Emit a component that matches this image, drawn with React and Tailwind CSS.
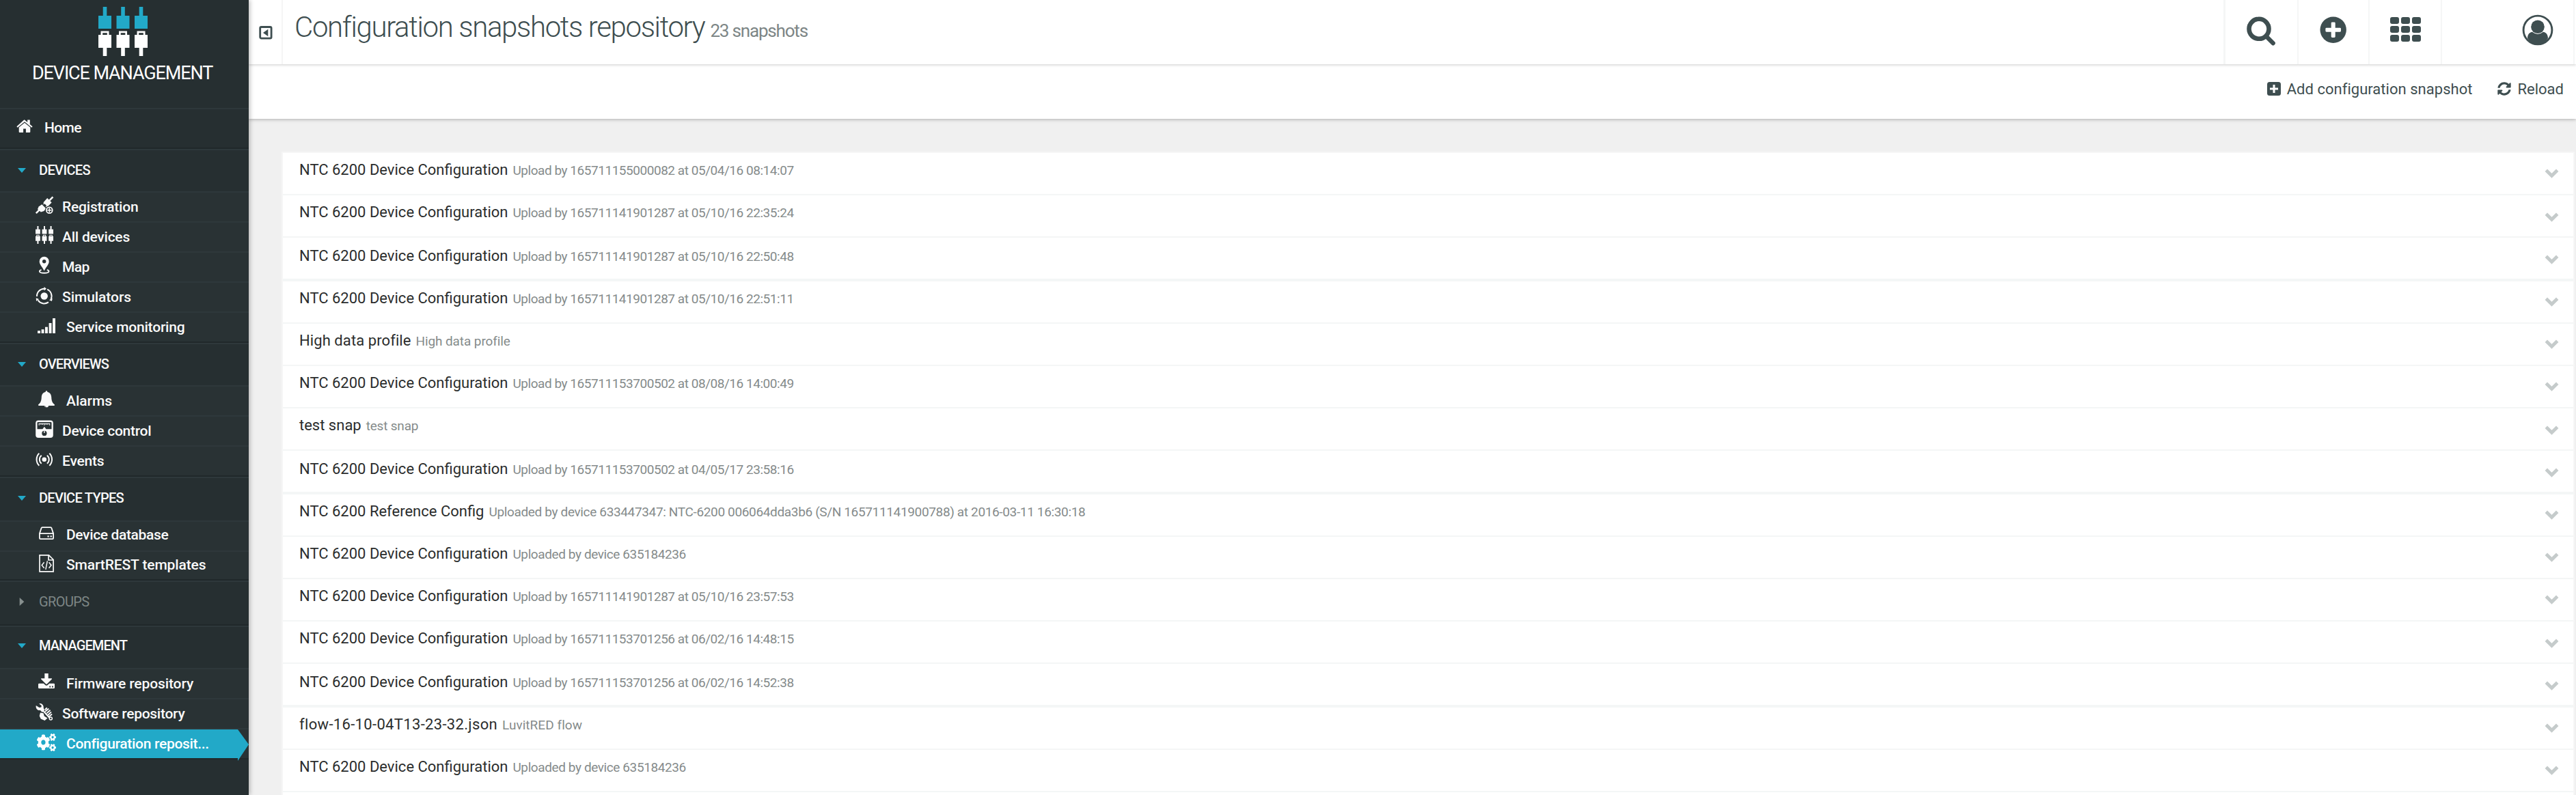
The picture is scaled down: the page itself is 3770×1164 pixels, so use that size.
import React from 'react';
import { FaCogs, FaSyncAlt } from 'react-icons/fa';

/* ---------- icons ---------- */

function Connectors({ className, top = 'currentColor' }) {
  return (
    <svg className={className} viewBox="0 0 72 72">
      {[0, 26.5, 53].map((x) => (
        <g key={x} transform={`translate(${x} 0)`}>
          <path d="M6.7 0h5.6v13H19v19H0V13h6.7z" fill={top} />
          <path
            d="M3.5 35.5h12V41H19v19h-6.7v12H6.7V60H0V41h3.5zM6.2 38.2V41h6.6v-2.8z"
            fill="currentColor"
            fillRule="evenodd"
          />
        </g>
      ))}
    </svg>
  );
}

const icon = 'block h-8 w-8 shrink-0';

function RegistrationIcon() {
  return (
    <svg className={icon} viewBox="0 0 32 32" fill="currentColor">
      <path d="M25.4 2.4 20 7.8M.8 26.2l5-5" stroke="currentColor" strokeWidth="2.6" />
      <path d="m17.2 4 6.4 6.4-5.8 6.4L11.400 10.400z" />
      <path d="m9.300 13.300 6 6-2.900 3.700-4.600 1.600L3 20.300l1.700-3.800z" />
      <path d="m11.500 13 2.300-2 3.600 3.600-2.200 2.400" fill="none" stroke="currentColor" strokeWidth="1.300" />
      <circle cx="20.300" cy="21.700" r="6.400" fill="#293234" />
      <circle cx="20.300" cy="21.700" r="4.400" fill="none" stroke="currentColor" strokeWidth="1.800" />
      <path d="M20.300 18.600v6.200M17.200 21.700h6.200" stroke="currentColor" strokeWidth="1.600" />
    </svg>
  );
}
function AllDevicesIcon() {
  return (
    <span className={icon}>
      <Connectors className="mt-[1px] block h-[26px] w-[26px]" />
    </span>
  );
}
function MapIcon() {
  return (
    <svg className={icon} viewBox="0 0 32 32" fill="currentColor">
      <path
        d="M12.700 1.700a7 7 0 0 1 7 7c0 4.500-4.200 8-7 13.800C9.900 16.700 5.700 13.200 5.700 8.700a7 7 0 0 1 7-7zm0 4.300a2.700 2.700 0 1 0 0 5.400 2.700 2.700 0 0 0 0-5.400z"
        fillRule="evenodd"
      />
      <path d="M8.600 21.200c-1.800.500-2.700 1.200-2.700 2 0 1.500 3 2.500 6.800 2.500s6.800-1 6.800-2.500c0-.800-.9-1.500-2.700-2" fill="none" stroke="currentColor" strokeWidth="1.900" />
    </svg>
  );
}
function SimulatorsIcon() {
  return (
    <svg className={icon} viewBox="0 0 32 32" fill="currentColor">
      <circle cx="12.700" cy="15.500" r="5.200" />
      <g fill="none" stroke="currentColor" strokeWidth="2">
        <path d="M2 16A10.800 10.800 0 0 1 13 4.700" />
        <path d="M17.200 5.700A10.800 10.800 0 0 1 22.600 20" />
        <path d="M18.900 24.400A10.800 10.800 0 0 1 3.600 21.500" />
      </g>
      <path d="M12.500 1.900 16 4.700l-3.500 2.900zM24.800 18.700l-.9 4.400-4-1.900zM1 23l-.2-4.700 4.200 1.700z" />
    </svg>
  );
}
function SignalIcon() {
  return (
    <svg className={icon} viewBox="0 0 32 32" fill="currentColor">
      <path d="M3 22.300h4V26H3zM8.600 20.300h3.900V26H8.600zM14 16.700h3.900V26H14zM19.600 11h3.900v15h-3.900zM25 4h4v22h-4z" />
    </svg>
  );
}
function BellIcon() {
  return (
    <svg className={icon} viewBox="0 0 32 32" fill="currentColor">
      <path d="M16 2.200c.9 0 1.500.7 1.400 1.700 3.700.7 5.600 3.500 5.800 7.300.2 6 1.600 8.800 4.800 11.200.2.800-.3 1.500-1.300 1.500H19.300a3.400 3.400 0 0 1-6.600 0H5.300c-1 0-1.500-.7-1.300-1.500 3.200-2.400 4.600-5.200 4.800-11.200.2-3.800 2.100-6.600 5.800-7.300-.1-1 .5-1.700 1.400-1.700z" />
      <path d="M13.800 24.300c.2 1.300 1 2 2.200 2.200" fill="none" stroke="#293234" strokeWidth=".7" />
    </svg>
  );
}
function ControlIcon() {
  return (
    <svg className={icon} viewBox="0 0 32 32" fill="currentColor">
      <rect x=".2" y="1.600" width="25.600" height="25.400" rx="4" />
      <path d="M3.800 4h18.400q1.300 0 1.300 1.300v9H15.500l-2.600-3.600-2.600 3.600H2.500v-9Q2.500 4 3.800 4z" fill="#293234" />
      <path d="M5.200 5.700v3M8 5.700v2.300M10.400 5.700v2.300M12.900 5.700v3M15.400 5.700v2.300M17.900 5.700v2.300M20.700 5.700v3M5.200 6.200h15.500" stroke="currentColor" strokeWidth="1.100" />
      <circle cx="12.900" cy="20.400" r="3.600" fill="#293234" />
      <path d="M12.900 16.500v3.500" stroke="currentColor" strokeWidth="1.400" />
    </svg>
  );
}
function EventsIcon() {
  return (
    <svg className={icon} viewBox="0 0 32 32" fill="currentColor">
      <circle cx="12.800" cy="14.700" r="3.300" />
      <g fill="none" stroke="currentColor" strokeWidth="2">
        <path d="M8.700 8.700a7.800 7.800 0 0 0 0 12M5.300 5.700a12.700 12.700 0 0 0 0 18M16.900 8.700a7.800 7.800 0 0 1 0 12M20.300 5.700a12.700 12.700 0 0 1 0 18" />
      </g>
    </svg>
  );
}
function DatabaseIcon() {
  return (
    <svg className={icon} viewBox="0 0 32 32" fill="none" stroke="currentColor" strokeWidth="1.800">
      <path d="M9.900 4.200h12.200q1 0 1.300.9l2.700 8v6.600q0 1.400-1.400 1.400H7.300q-1.400 0-1.400-1.400v-6.600l2.700-8q.300-.900 1.300-.900zM6 13.200h20" />
      <path d="M17.500 17.400h2.200M21.600 17.400h2.200" strokeWidth="2.200" />
    </svg>
  );
}
function TemplateIcon() {
  return (
    <svg className={icon} viewBox="0 0 32 32" fill="none" stroke="currentColor" strokeWidth="1.700">
      <path d="M6 .9h13.500l6.600 6.600v17.300H6zM19 1v7h7" />
      <path d="m12.600 11.300-3.400 4.200 3.400 4.200M19.600 11.300l3.400 4.200-3.400 4.200M17.300 9.300l-2.400 12.500" strokeWidth="1.500" />
    </svg>
  );
}
function DownloadIcon() {
  return (
    <svg className={icon} viewBox="0 0 32 32" fill="currentColor">
      <path d="M13.300 2h5.400v7.300h4.600c.7 0 .9.700.5 1.200L16.700 17.400q-.7.700-1.400 0L8.200 10.500c-.4-.5-.2-1.200.5-1.200h4.600z" />
      <path
        d="M5.200 16.800h6.700l2.100 2q2 1.700 4 0l2.100-2h6.700q1.200 0 1.200 1.200v4.800q0 1.200-1.200 1.200H5.200Q4 24 4 22.800V18q0-1.200 1.200-1.200zM20.300 20.600v1.800h1.800v-1.800zM24 20.600v1.800h1.800v-1.800z"
        fillRule="evenodd"
      />
    </svg>
  );
}
function ToolsIcon() {
  return (
    <svg className={icon} viewBox="0 0 32 32" fill="currentColor">
      <path d="M5.200 2.200 8.800 5.300l-.5 2.200-2.800.5L.8 4.900C-.2 9 2.700 12.700 7 12l3 3 3.200-3.600-1.500-2.600C12.300 4.300 9.200 1 5.200 2.200z" />
      <path d="m14.300 10.700 2-1.900M14.500 13.600l4.300-3.500M17 15.800l4-3.600M18.700 18.500l3.800-3.600M20 21l3.500-3" stroke="currentColor" strokeWidth="1.900" strokeLinecap="round" />
      <path d="M11 12.500l10 11" stroke="currentColor" strokeWidth="2" />
      <path d="M7 15.500l4.500.800 1.300 4.300 4.700 3-4 3.300-5.800-2.300-2-4.300z" />
      <circle cx="22.300" cy="24" r="2" fill="none" stroke="currentColor" strokeWidth="1.500" />
    </svg>
  );
}
function CogsIcon() {
  return (
    <span className={icon}>
      <FaCogs className="ml-[2px] mt-[2px] block h-[26px] w-[28px]" preserveAspectRatio="none" />
    </span>
  );
}

/* ---------- sidebar ---------- */

const sections = [
  {
    title: 'DEVICES',
    head: 'h-[60px]',
    line: 'leading-[58px]',
    track: 'tracking-[-0.63px]',
    items: [
      { text: 'Registration', Icon: RegistrationIcon, track: 'tracking-[-0.2px]' },
      { text: 'All devices', Icon: AllDevicesIcon, track: 'tracking-[-0.24px]' },
      { text: 'Map', Icon: MapIcon, track: 'tracking-[-0.6px]' },
      { text: 'Simulators', Icon: SimulatorsIcon, track: 'tracking-[-0.06px]' },
      { text: 'Service monitoring', Icon: SignalIcon, wide: true, track: 'tracking-[-0.2px]' },
    ],
  },
  {
    title: 'OVERVIEWS',
    head: 'h-[60px]',
    line: 'leading-[58px]',
    track: 'tracking-[-0.86px]',
    items: [
      { text: 'Alarms', Icon: BellIcon, wide: true, track: 'tracking-[-0.02px]' },
      { text: 'Device control', Icon: ControlIcon, track: 'tracking-[-0.26px]' },
      { text: 'Events', Icon: EventsIcon, track: 'tracking-[-0.2px]' },
    ],
  },
  {
    title: 'DEVICE TYPES',
    head: 'h-[62px]',
    line: 'leading-[58px]',
    track: 'tracking-[-0.71px]',
    items: [
      { text: 'Device database', Icon: DatabaseIcon, wide: true, track: 'tracking-[-0.36px]', line: 'h-[42px] leading-[38px]' },
      { text: 'SmartREST templates', Icon: TemplateIcon, wide: true, track: 'tracking-[-0.12px]', line: 'h-[40px] leading-[38px]' },
    ],
  },
  { title: 'GROUPS', head: 'h-[62px]', line: 'leading-[58px]', track: 'tracking-[-0.61px]', closed: true, items: [] },
  {
    title: 'MANAGEMENT',
    head: 'h-[60px]',
    line: 'leading-[54px]',
    track: 'tracking-[-0.92px]',
    items: [
      { text: 'Firmware repository', Icon: DownloadIcon, wide: true, track: 'tracking-[-0.11px]' },
      { text: 'Software repository', Icon: ToolsIcon, track: 'tracking-[-0.27px]' },
      { text: 'Configuration reposit...', Icon: CogsIcon, wide: true, track: 'tracking-[-0.3px]', active: true },
    ],
  },
];

function NavItem({ text, Icon, wide, track, line = 'h-[42px] leading-[42px]', active }) {
  return (
    <li className="border-t-2 border-[#2e383b] bg-[#293234]">
      <a className={`relative flex items-start ${line} ${active ? 'w-[348px] bg-[#22a9c8] text-white' : 'w-[364px]'}`}>
        <span className="ml-[52px] mt-1 shrink-0"><Icon /></span>
        <span className={`whitespace-nowrap text-[21px] font-medium ${track} ${wide ? 'ml-[13px]' : 'ml-[7px]'}`}>{text}</span>
        {active && (
          <svg className="absolute left-[348px] top-0 z-10 h-[46px] w-[16px]" viewBox="0 0 16 46">
            <path d="M0 0l16 22L0 46z" fill="#22a9c8" />
          </svg>
        )}
      </a>
    </li>
  );
}

function Section({ title, head, line, track, closed, items }) {
  return (
    <section className="border-b-2 border-t-2 border-b-[#20282a] border-t-[#2e383b]">
      <h2 className={`flex items-start ${head}`}>
        <span className={`flex items-center ${line}`}>
          {closed ? (
            <svg className="ml-[28px] mr-[21px] h-3 w-2" viewBox="0 0 8 12"><path d="M.7 0 7.300 6 .7 12z" fill="#87908f" /></svg>
          ) : (
            <svg className="ml-[26px] mr-[19px] mt-px h-[7px] w-3" viewBox="0 0 12 7"><path d="M0 0h12L6 7z" fill="#22a9c8" /></svg>
          )}
          <span className={`whitespace-nowrap text-[20px] ${track} ${closed ? 'font-normal text-[#7d8685]' : 'font-medium'}`}>{title}</span>
        </span>
      </h2>
      <ul>{items.map((i) => <NavItem key={i.text} {...i} />)}</ul>
    </section>
  );
}

function Sidebar() {
  return (
    <aside className="z-20 h-[1164px] w-[364px] shrink-0 overflow-hidden bg-[#262f31] text-[#fafafa] shadow-[2px_0_6px_rgba(0,0,0,0.25)]">
      <div className="flex h-[158px] flex-col pt-[10px] text-white">
        <Connectors className="ml-[144px] block h-[72px] w-[72px]" top="#22a9c8" />
        <div className="ml-[47px] mt-1 whitespace-nowrap text-[27px] leading-[42px] tracking-[-1.12px]">DEVICE MANAGEMENT</div>
      </div>
      <div className="flex h-[60px] items-start border-b-2 border-t-2 border-b-[#20282a] border-t-[#2e383b]">
        <svg className="ml-[24px] mt-[15px] h-5 w-6" viewBox="0 0 24 20" fill="currentColor">
          <path d="M12 .4 16.200 4V.6h3.600v6.500l3.800 3.200-1.300 1.500L12 3.200 1.700 11.800.4 10.300 10.600 1q1.400-1.200 1.400-.6z" />
          <path d="m12 4.700 8.300 6.900V18q0 1-1 1h-5.400v-5.500h-3.800V19H4.700q-1 0-1-1v-6.400z" />
        </svg>
        <span className="ml-[17px] text-[21px] font-medium leading-[54px] tracking-[-0.6px]">Home</span>
      </div>
      {sections.map((s) => <Section key={s.title} {...s} />)}
    </aside>
  );
}

/* ---------- header ---------- */

function TopBar() {
  return (
    <header className="relative z-10 flex h-[94px] bg-white text-[#3e4e50] shadow-[0_1px_4px_rgba(0,0,0,0.2)]">
      <div className="w-[50px] shrink-0 border-r-2 border-[#f5f5f5] pl-[15px] pt-[38px]">
        <svg className="block h-5 w-5" viewBox="0 0 20 20">
          <rect x="1.700" y="1.500" width="16.400" height="16.600" rx="1.800" fill="none" stroke="currentColor" strokeWidth="2.800" />
          <path d="m6 10 7.300-5.300v10.600z" fill="currentColor" />
        </svg>
      </div>
      <h1 className="ml-[17px] whitespace-nowrap text-[42px] font-light leading-[79px] tracking-[-1.36px]">
        Configuration snapshots repository
        <span className="ml-[8px] text-[26px] font-normal tracking-[-1.18px] text-[#7d8686]">23 snapshots</span>
      </h1>
      <div className="ml-auto flex">
        <div className="w-[110px] border-l-[3px] border-r-2 border-[#f5f6f6] pl-[31px] pt-[24px]">
          <svg className="block h-[44px] w-[44px]" viewBox="0 0 44 44" fill="none" stroke="currentColor">
            <circle cx="18" cy="18.300" r="14.500" strokeWidth="6.600" />
            <path d="m29 29.500 9.700 9.800" strokeWidth="6.300" strokeLinecap="round" />
          </svg>
        </div>
        <div className="w-[104px] border-r-2 border-[#f5f6f6] pl-[31px] pt-[24px]">
          <svg className="block h-[40px] w-[40px]" viewBox="0 0 40 40">
            <circle cx="19.700" cy="19.700" r="19.200" fill="currentColor" />
            <path d="M16.700 9.800q0-1.400 1.400-1.400h3.200q1.400 0 1.400 1.400v6.900h6.900q1.400 0 1.400 1.400v3.200q0 1.400-1.400 1.400h-6.900v6.900q0 1.400-1.400 1.400h-3.200q-1.400 0-1.400-1.400v-6.900H9.800q-1.400 0-1.400-1.400v-3.200q0-1.400 1.400-1.400h6.900z" fill="#fff" />
          </svg>
        </div>
        <div className="w-[106px] border-r-2 border-[#f5f6f6] pl-[30px] pt-[24px]">
          <div className="grid w-[45px] grid-cols-3 gap-x-[3px] gap-y-[3px] pt-[1px]">
            {Array.from({ length: 9 }, (_, i) => <i key={i} className="h-[10px] rounded-[3px] bg-[#3e4e50]" />)}
          </div>
        </div>
        <div className="w-[194px] border-r-2 border-[#f5f6f6] pl-[117px] pt-[21px]">
          <svg className="block h-[46px] w-[46px]" viewBox="0 0 46 46">
            <circle cx="23" cy="23" r="20.900" fill="none" stroke="currentColor" strokeWidth="2.900" />
            <path d="M8 35c.2-5.600 2.700-8.600 7-9.200q7.900 6.400 16 0c4.300.6 6.800 3.600 7 9.200Q32.500 44.200 23 44.200T8 35z" fill="currentColor" />
            <circle cx="23" cy="18.200" r="9.800" fill="currentColor" />
          </svg>
        </div>
        <div className="w-[2px]" />
      </div>
    </header>
  );
}

function Toolbar() {
  return (
    <div className="relative flex h-[80px] items-start justify-end bg-white pr-[18px] text-[22px] leading-[73px] text-[#3e4e50] shadow-[0_1px_5px_rgba(0,0,0,0.28)]">
      <svg className="mt-[26px] h-5 w-5" viewBox="0 0 20 20">
        <rect width="20" height="20" rx="3.500" fill="currentColor" />
        <path d="M10 4v12M4 10h12" stroke="#fff" strokeWidth="3" />
      </svg>
      <span className="ml-[9px] whitespace-nowrap tracking-[0.03px]">Add configuration snapshot</span>
      <FaSyncAlt className="ml-[36px] mt-[26px] h-5 w-5" />
      <span className="ml-[10px] tracking-[0px]">Reload</span>
    </div>
  );
}

/* ---------- list ---------- */

const N = 'NTC 6200 Device Configuration';
const UPLOAD = 'tracking-[-0.46px]';
const DEVICE = 'tracking-[-0.4px]';
const rows = [
  { name: N, note: 'Upload by 165711155000082 at 05/04/16 08:14:07', track: UPLOAD },
  { name: N, note: 'Upload by 165711141901287 at 05/10/16 22:35:24', track: UPLOAD },
  { name: N, note: 'Upload by 165711141901287 at 05/10/16 22:50:48', track: UPLOAD },
  { name: N, note: 'Upload by 165711141901287 at 05/10/16 22:51:11', track: UPLOAD },
  { name: 'High data profile', note: 'High data profile', nameTrack: 'tracking-[0.08px]', track: 'tracking-[-0.1px]' },
  { name: N, note: 'Upload by 165711153700502 at 08/08/16 14:00:49', track: UPLOAD },
  { name: 'test snap', note: 'test snap', track: 'tracking-[-0.2px]' },
  { name: N, note: 'Upload by 165711153700502 at 04/05/17 23:58:16', track: UPLOAD },
  {
    name: 'NTC 6200 Reference Config',
    note: 'Uploaded by device 633447347: NTC-6200 006064dda3b6 (S/N 165711141900788) at 2016-03-11 16:30:18',
    track: 'tracking-[-0.35px]',
  },
  { name: N, note: 'Uploaded by device 635184236', track: DEVICE },
  { name: N, note: 'Upload by 165711141901287 at 05/10/16 23:57:53', track: UPLOAD },
  { name: N, note: 'Upload by 165711153701256 at 06/02/16 14:48:15', track: UPLOAD },
  { name: N, note: 'Upload by 165711153701256 at 06/02/16 14:52:38', track: UPLOAD },
  { name: 'flow-16-10-04T13-23-32.json', note: 'LuvitRED flow', nameTrack: 'tracking-[0.33px]', track: 'tracking-[0.05px]' },
  { name: N, note: 'Uploaded by device 635184236', track: DEVICE },
];

function Row({ name, note, nameTrack = '', track, index }) {
  const phase = index % 5;
  const thick = phase === 2;
  const low = phase === 1 || phase === 2;
  return (
    <li className={`flex items-start justify-between border-[#f4f6f6] pl-[24px] pr-[21px] ${thick ? 'h-[64px] border-b-4' : 'h-[62px] border-b-2'}`}>
      <div className={`whitespace-nowrap text-[22px] leading-[49px] text-[#2b2d2d] ${thick ? 'pt-[2px]' : ''}`}>
        <span className={nameTrack}>{name}</span>
        <span className={`ml-[7px] text-[19px] text-[#858b8b] ${track}`}>{note}</span>
      </div>
      <svg className={`h-[14px] w-[21px] ${low ? 'mt-[25px]' : 'mt-[23px]'}`} viewBox="0 0 21 14">
        <path d="m2.300 2.300 8.200 8 8.200-8" fill="none" stroke="#c5cbcb" strokeWidth="4.900" />
      </svg>
    </li>
  );
}

export default function App() {
  return (
    <div className="flex h-[1164px] w-[3770px] overflow-hidden bg-[#f0f0f0] font-['Roboto',sans-serif]">
      <Sidebar />
      <main className="flex min-w-0 flex-1 flex-col">
        <TopBar />
        <Toolbar />
        <ul className="ml-[48px] mr-[2px] mt-[48px] border-2 border-b-0 border-[#f6f6f6] bg-white">
          {rows.map((r, i) => <Row key={i} index={i} {...r} />)}
          <li className="h-[4px]" />
        </ul>
      </main>
    </div>
  );
}
